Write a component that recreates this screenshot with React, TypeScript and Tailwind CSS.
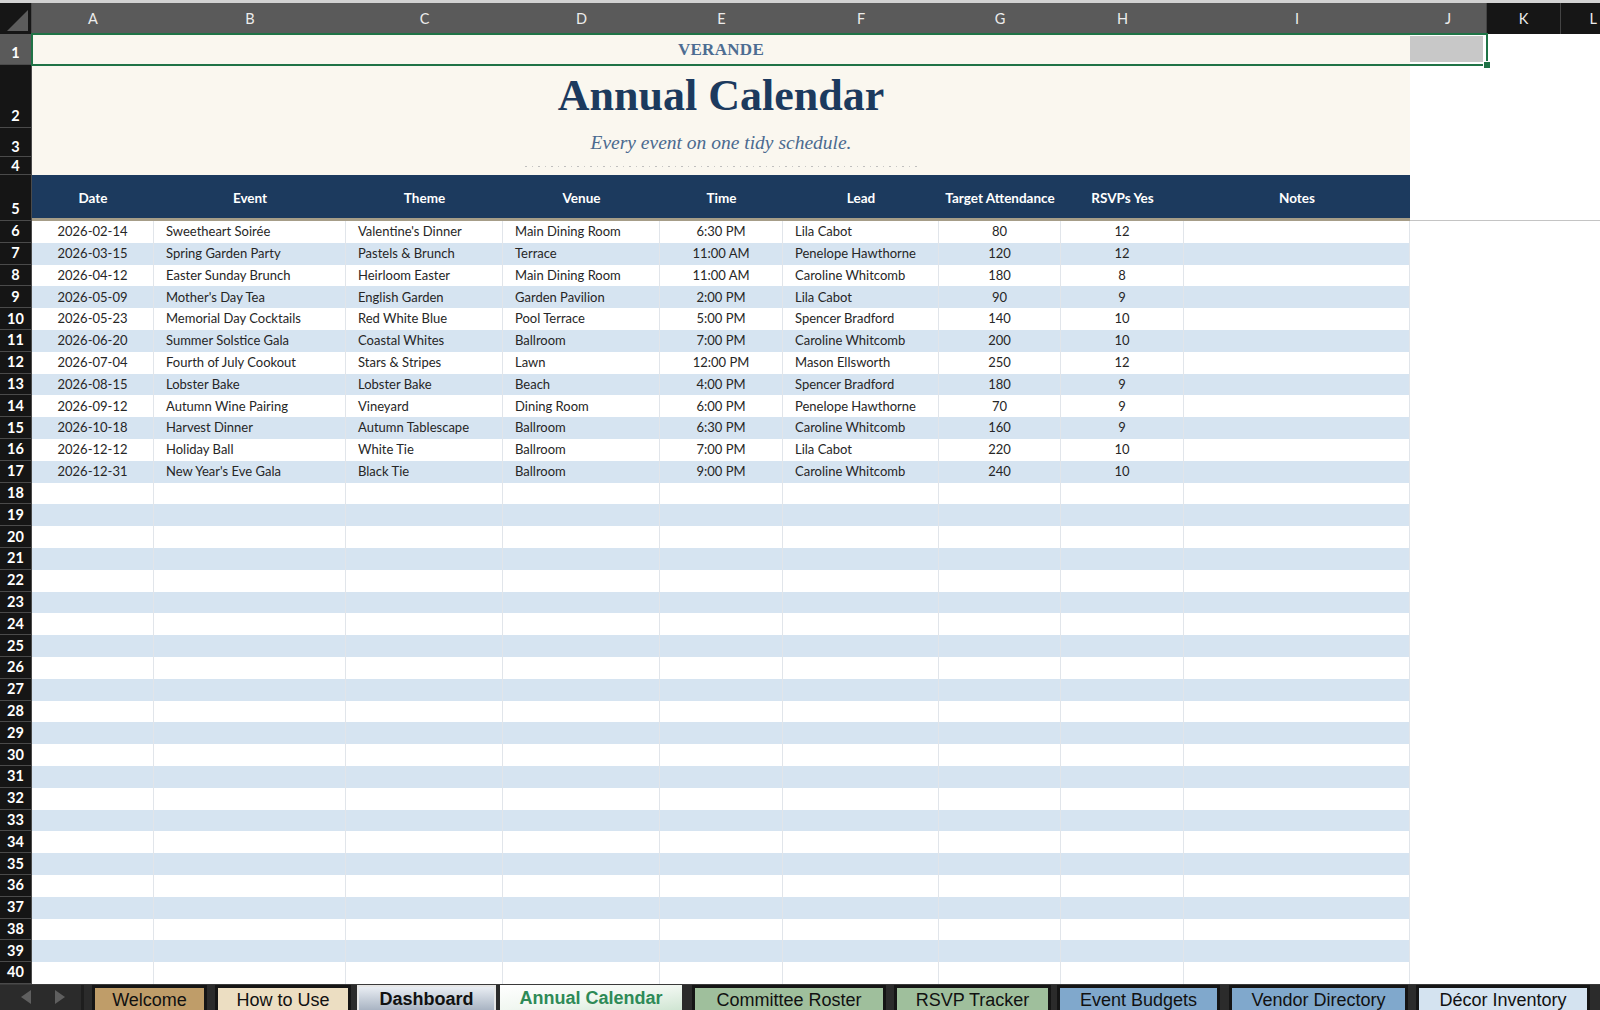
import React from "react"
import clsx from "clsx"

const colW = [
  "w-[122px]",
  "w-[192px]",
  "w-[157px]",
  "w-[157px]",
  "w-[123px]",
  "w-[156px]",
  "w-[122px]",
  "w-[123px]",
  "w-[226px]",
]
const align = [
  "justify-center",
  "justify-start pl-[12px]",
  "justify-start pl-[12px]",
  "justify-start pl-[12px]",
  "justify-center",
  "justify-start pl-[12px]",
  "justify-center",
  "justify-center",
  "justify-start pl-[12px]",
]
const letters = ["A", "B", "C", "D", "E", "F", "G", "H", "I"]
const headers = ["Date", "Event", "Theme", "Venue", "Time", "Lead", "Target Attendance", "RSVPs Yes", "Notes"]

const events = [
  ["2026-02-14", "Sweetheart Soirée", "Valentine's Dinner", "Main Dining Room", "6:30 PM", "Lila Cabot", "80", "12"],
  ["2026-03-15", "Spring Garden Party", "Pastels & Brunch", "Terrace", "11:00 AM", "Penelope Hawthorne", "120", "12"],
  ["2026-04-12", "Easter Sunday Brunch", "Heirloom Easter", "Main Dining Room", "11:00 AM", "Caroline Whitcomb", "180", "8"],
  ["2026-05-09", "Mother's Day Tea", "English Garden", "Garden Pavilion", "2:00 PM", "Lila Cabot", "90", "9"],
  ["2026-05-23", "Memorial Day Cocktails", "Red White Blue", "Pool Terrace", "5:00 PM", "Spencer Bradford", "140", "10"],
  ["2026-06-20", "Summer Solstice Gala", "Coastal Whites", "Ballroom", "7:00 PM", "Caroline Whitcomb", "200", "10"],
  ["2026-07-04", "Fourth of July Cookout", "Stars & Stripes", "Lawn", "12:00 PM", "Mason Ellsworth", "250", "12"],
  ["2026-08-15", "Lobster Bake", "Lobster Bake", "Beach", "4:00 PM", "Spencer Bradford", "180", "9"],
  ["2026-09-12", "Autumn Wine Pairing", "Vineyard", "Dining Room", "6:00 PM", "Penelope Hawthorne", "70", "9"],
  ["2026-10-18", "Harvest Dinner", "Autumn Tablescape", "Ballroom", "6:30 PM", "Caroline Whitcomb", "160", "9"],
  ["2026-12-12", "Holiday Ball", "White Tie", "Ballroom", "7:00 PM", "Lila Cabot", "220", "10"],
  ["2026-12-31", "New Year's Eve Gala", "Black Tie", "Ballroom", "9:00 PM", "Caroline Whitcomb", "240", "10"],
]

const tabs = [
  { name: "Welcome", cls: "ml-[8px] w-[115px] text-[#111] bg-[#bf9d69] border-[3px] border-[#151515] border-b-0" },
  { name: "How to Use", cls: "ml-[8px] w-[136px] text-[#111] bg-[#ecdec2] border-[3px] border-[#151515] border-b-0" },
  { name: "Dashboard", cls: "ml-[6px] w-[139px] text-[#111] bg-gradient-to-b from-[#e9edf3] to-[#a9b4c3] border-[2px] border-[#e6e6e6] border-b-0 font-bold" },
  { name: "Annual Calendar", cls: "ml-[4px] w-[182px] text-[#2e8a57] bg-gradient-to-br from-white via-[#f1f7f1] to-[#cfe5d2] font-bold" },
  { name: "Committee Roster", cls: "ml-[10px] w-[194px] text-[#111] bg-[#9fbf9c] border-[3px] border-[#151515] border-b-0" },
  { name: "RSVP Tracker", cls: "ml-[8px] w-[157px] text-[#111] bg-[#9fbf9c] border-[3px] border-[#151515] border-b-0" },
  { name: "Event Budgets", cls: "ml-[6px] w-[163px] text-[#111] bg-[#80a8cc] border-[3px] border-[#151515] border-b-0" },
  { name: "Vendor Directory", cls: "ml-[9px] w-[179px] text-[#111] bg-[#80a8cc] border-[3px] border-[#151515] border-b-0" },
  { name: "Décor Inventory", cls: "ml-[8px] w-[174px] text-[#111] bg-[#d4e3f0] border-[3px] border-[#151515] border-b-0" },
]

function RowHead({ n }: { n: number }) {
  return (
    <div className="w-[32px] shrink-0 flex items-center justify-center bg-[#151515] text-white font-bold text-[14.5px] leading-[16px] border-b border-r border-[#4a4a4a]">
      {n}
    </div>
  )
}

function DataRow({ n, cells }: { n: number; cells?: string[] }) {
  const blue = n % 2 === 1
  return (
    <div className="flex h-[21.8px]">
      <RowHead n={n} />
      <div className={clsx("flex", blue ? "bg-[#d6e4f1]" : "bg-white")}>
        {colW.map((w, i) => (
          <div key={i} className={clsx(w, align[i], "shrink-0 flex items-center border-r border-[#e1e5ea] text-[13px] text-[#262626] whitespace-nowrap overflow-hidden")}>
            {cells?.[i] ?? ""}
          </div>
        ))}
      </div>
      <div className="flex-1 bg-white" />
    </div>
  )
}

export default function App() {
  const rows = Array.from({ length: 35 }, (_, i) => i + 6)
  return (
    <div className="w-[1600px] h-[1010px] overflow-hidden bg-white relative flex flex-col font-['Lato','Liberation_Sans',sans-serif]">
      {/* column letters */}
      <div className="h-[34px] shrink-0 flex border-t-[3px] border-[#d2d2d2]">
        <div className="w-[32px] shrink-0 bg-[#161616] border-r border-[#4a4a4a]">
          <svg width="32" height="31" className="block">
            <polygon points="7,28 28,7 28,28" fill="#5c5c5c" />
          </svg>
        </div>
        <div className="flex bg-[#5a5a5a] text-[#ececec] text-[14.5px]">
          {colW.map((w, i) => (
            <div key={i} className={clsx(w, "shrink-0 flex items-center justify-center")}>{letters[i]}</div>
          ))}
          <div className="w-[76px] shrink-0 flex items-center justify-center">J</div>
        </div>
        <div className="w-[75px] shrink-0 bg-[#161616] border-l border-r border-[#444] text-[#ececec] text-[14.5px] flex items-center justify-center">K</div>
        <div className="flex-1 bg-[#161616] text-[#ececec] text-[14.5px] flex items-center justify-end pr-[3px]">L</div>
      </div>

      {/* title block rows 1-4 */}
      <div className="flex shrink-0">
        <div className="w-[32px] shrink-0 flex flex-col text-white font-bold text-[14.5px] leading-[16px]">
          <div className="h-[31px] bg-[#5a5a5a] flex items-end justify-center pb-[3px] border-b border-r border-[#4a4a4a]">1</div>
          <div className="h-[63px] bg-[#151515] flex items-end justify-center pb-[3px] border-b border-r border-[#4a4a4a]">2</div>
          <div className="h-[29px] bg-[#151515] flex items-end justify-center pb-[1px] border-b border-r border-[#4a4a4a]">3</div>
          <div className="h-[18px] bg-[#151515] flex items-center justify-center border-b border-r border-[#4a4a4a]">4</div>
        </div>
        <div className="w-[1378px] shrink-0 bg-[#faf7ef] flex flex-col">
          <div className="h-[31px] flex items-center justify-center font-['Liberation_Serif',serif] font-bold text-[17px] text-[#4d6d92] tracking-[0.3px]">VERANDE</div>
          <div className="h-[63px] flex items-center justify-center font-['Liberation_Serif',serif] font-bold text-[44px] text-[#1c3a5e] pb-[1px]">Annual Calendar</div>
          <div className="h-[29px] flex items-center justify-center font-['Liberation_Serif',serif] italic text-[19.5px] text-[#4b6a8f] pt-[1px]">Every event on one tidy schedule.</div>
          <div className="h-[18px] flex items-center justify-center">
            <div className="flex gap-[5px] mt-[1px]">
              {Array.from({ length: 61 }).map((_, i) => (
                <span key={i} className="block w-[1.5px] h-[1.5px] rounded-full bg-[#b8b8b8]" />
              ))}
            </div>
          </div>
        </div>
        <div className="w-[76px] shrink-0 flex flex-col">
          <div className="h-[31px] pt-[2px] pb-[3px] pr-[3px]">
            <div className="w-full h-full bg-[#c8c8c8]" />
          </div>
        </div>
        <div className="flex-1" />
      </div>

      {/* header row 5 */}
      <div className="flex h-[46px] shrink-0">
        <div className="w-[32px] shrink-0 bg-[#151515] text-white font-bold text-[14.5px] leading-[16px] flex items-end justify-center pb-[3px] border-b border-r border-[#4a4a4a]">5</div>
        <div className="flex bg-[#1c3a5e] border-b-[3px] border-[#a69d88]">
          {colW.map((w, i) => (
            <div key={i} className={clsx(w, "shrink-0 flex items-center justify-center pt-[4px] text-white font-bold text-[13.5px] whitespace-nowrap")}>
              {headers[i]}
            </div>
          ))}
        </div>
        <div className="flex-1 border-b border-[#c4c4c4]" />
      </div>

      {/* data rows */}
      <div className="flex flex-col shrink-0">
        {rows.map((n) => (
          <DataRow key={n} n={n} cells={events[n - 6]} />
        ))}
      </div>

      {/* sheet tabs */}
      <div className="flex-1 bg-[#2b2b2b] flex items-end border-t border-[#3a3a3a] font-['Liberation_Sans',sans-serif]">
        <div className="w-[84px] h-full flex items-center justify-center gap-[24px] pl-[4px] border-r-[3px] border-[#1e1e1e]">
          <svg width="10" height="14" viewBox="0 0 10 14"><polygon points="10,0 0,7 10,14" fill="#5f5f5f" /></svg>
          <svg width="10" height="14" viewBox="0 0 10 14"><polygon points="0,0 10,7 0,14" fill="#5f5f5f" /></svg>
        </div>
        {tabs.map((t) => (
          <div key={t.name} className={clsx("h-[25px] shrink-0 flex items-center justify-center text-[18px] whitespace-nowrap leading-none pt-[1px]", t.cls)}>
            {t.name}
          </div>
        ))}
      </div>

      {/* selection outline over row 1 */}
      <div className="absolute left-[31px] top-[33px] w-[1457px] h-[33px] border-2 border-[#1f7346] pointer-events-none" />
      <div className="absolute left-[1483px] top-[61px] w-[8px] h-[8px] bg-[#1f7346] border border-white" />
    </div>
  )
}
